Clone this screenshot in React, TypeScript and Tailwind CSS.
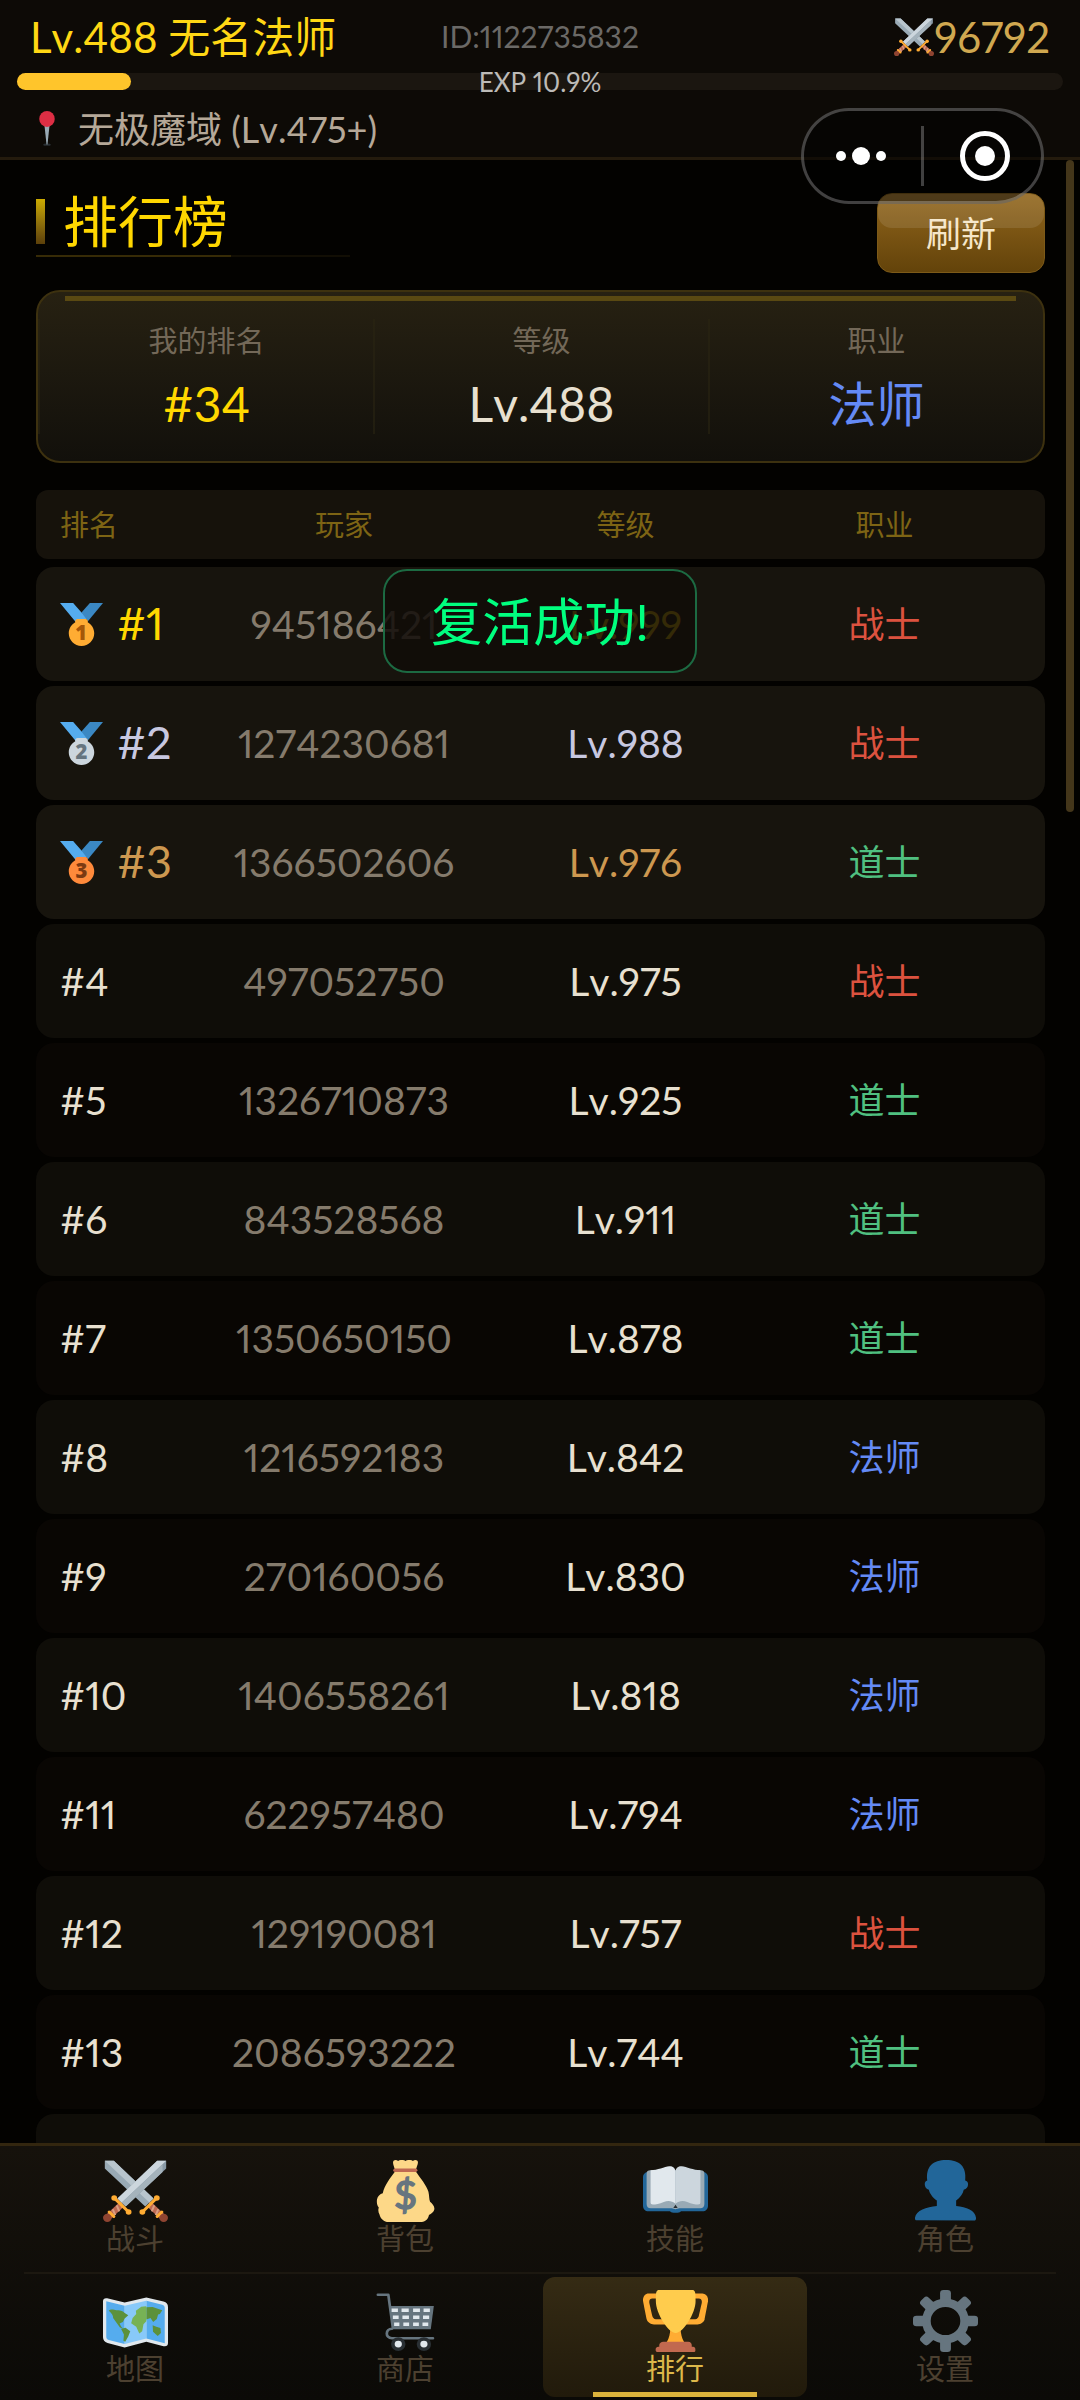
import { ReactNode } from "react";
import clsx from "clsx";

type Job = "战士" | "道士" | "法师";

interface Player {
  rank: number;
  id: string;
  level: number;
  job: Job;
}

const players: Player[] = [
  { rank: 1, id: "945186421", level: 999, job: "战士" },
  { rank: 2, id: "1274230681", level: 988, job: "战士" },
  { rank: 3, id: "1366502606", level: 976, job: "道士" },
  { rank: 4, id: "497052750", level: 975, job: "战士" },
  { rank: 5, id: "1326710873", level: 925, job: "道士" },
  { rank: 6, id: "843528568", level: 911, job: "道士" },
  { rank: 7, id: "1350650150", level: 878, job: "道士" },
  { rank: 8, id: "1216592183", level: 842, job: "法师" },
  { rank: 9, id: "270160056", level: 830, job: "法师" },
  { rank: 10, id: "1406558261", level: 818, job: "法师" },
  { rank: 11, id: "622957480", level: 794, job: "法师" },
  { rank: 12, id: "129190081", level: 757, job: "战士" },
  { rank: 13, id: "2086593222", level: 744, job: "道士" },
];

const jobColor: Record<Job, string> = {
  战士: "text-[#dc523f]",
  道士: "text-[#50c080]",
  法师: "text-[#648af5]",
};

const rankColor: Record<number, string> = {
  1: "text-[#ffd700]",
  2: "text-[#c8c8e0]",
  3: "text-[#cd9850]",
};

const medalColor: Record<number, { disc: string; digit: string }> = {
  1: { disc: "#FFAC33", digit: "#A65708" },
  2: { disc: "#CCD6DD", digit: "#66757F" },
  3: { disc: "#FF8A3B", digit: "#7C3A12" },
};

const Emoji = ({ className, children }: { className: string; children: ReactNode }) => (
  <svg viewBox="0 0 36 36" preserveAspectRatio="none" className={className} aria-hidden="true">
    {children}
  </svg>
);

const Medal = ({ rank }: { rank: number }) => (
  <Emoji className="h-[43px] w-[43px] shrink-0">
    <path fill="#55ACEE" d="M18 8l-7-8H0l14 17 11.521-4.75z" />
    <path fill="#3B88C3" d="M25 0l-7 8 5.39 7.312 1.227-1.489L36 0z" />
    <path
      fill={medalColor[rank].disc}
      d="M23.205 16.026c.08-.217.131-.448.131-.693 0-1.104-.896-2-2-2h-6.667c-1.104 0-2 .896-2 2 0 .245.05.476.131.693-3.258 1.826-5.464 5.307-5.464 9.307C7.336 31.224 12.111 36 18.003 36s10.667-4.776 10.667-10.667c0-4-2.206-7.481-5.465-9.307z"
    />
    <text x="18" y="31.3" textAnchor="middle" fontSize="17" fontWeight="800" fontFamily="Open Sans, sans-serif" fill={medalColor[rank].digit}>
      {rank}
    </text>
  </Emoji>
);

const Hilt = () => (
  <>
    <path stroke="#BF6952" strokeWidth="3.6" d="M3 33L10.5 25.6" />
    <path stroke="#D99E82" strokeWidth="1.1" d="M5.4 28.6l1.4 3.4M7.6 26.4l1.4 3.4M9.6 24.6l1.2 3" />
    <path stroke="#FFAC33" strokeWidth="1.7" strokeLinecap="round" d="M6.2 22l8 8.2M3.4 30.2l2.6 2.6" />
    <circle cx="6.2" cy="22" r="1.6" fill="#FFAC33" />
    <circle cx="14.2" cy="30.2" r="1.6" fill="#FFAC33" />
    <circle cx="2.4" cy="33.6" r="2.4" fill="#8F4431" />
  </>
);

const SwordsIcon = ({ className }: { className: string }) => (
  <Emoji className={className}>
    <path fill="#99AAB5" d="M1 5V.4h5L28 22.4 23.4 27z" />
    <path fill="#B8C5CD" d="M1 .4h5L28 22.4l-2.3 2.3z" />
    <path fill="#8899A6" d="M35 5V.4h-5L8 22.4l4.6 4.6z" />
    <path fill="#CCD6DD" d="M35 .4h-5L8 22.4l2.3 2.4z" />
    <path fill="#A5B3BC" d="M10.3 24.8L33 2.5V7L12.6 27z" />
    <Hilt />
    <g transform="matrix(-1 0 0 1 36 0)">
      <Hilt />
    </g>
  </Emoji>
);

const PinIcon = ({ className }: { className: string }) => (
  <Emoji className={className}>
    <ellipse cx="18" cy="34.6" rx="4" ry="1.2" fill="#292F33" />
    <path fill="#99AAB5" d="M15.2 14h5.6L18.5 34.5h-1z" />
    <circle cx="18" cy="8.2" r="8.2" fill="#DD2E44" />
  </Emoji>
);

const BagIcon = ({ className }: { className: string }) => (
  <Emoji className={className}>
    <path
      fill="#FDD888"
      d="M12.3 6.5C12 4.4 11 2.7 11.1 1.4 11.2-.2 13-.3 13.9.6 15-.3 17-.2 18 .6c1-.8 3-.9 4.1 0 .9-.9 2.8-.8 2.8.8 0 1.3-1 3-1.3 5.1 2.6 4 6 8 7.1 12 .5 2 .3 4.3.9 5.7 1 1 2.4 2.2 2.4 4 0 2-1.8 3-3 3.8-.3 2-1.8 4-4 4H8.6c-2.5 0-4.5-2-5-4.400-.6-1.200-.9-2.400-.4-4-1-1-1.200-3-1-4.600.3-1.900 1.700-3.300 3.200-3.700C6.500 14 9.700 10.500 12.300 6.500z"
    />
    <path fill="#BF6952" d="M12.2 5h11.4a1 1 0 010 2H12.2a1 1 0 010-2z" />
    <text x="18" y="28.3" textAnchor="middle" fontSize="22" fontWeight="500" fontFamily="Lato, sans-serif" fill="#67757F" stroke="#67757F" strokeWidth=".8">
      $
    </text>
  </Emoji>
);

const BookIcon = ({ className }: { className: string }) => (
  <Emoji className={className}>
    <path fill="#226699" d="M3 7h30c1.7 0 3 1.2 3 3v16.5c0 2-1.3 3.2-3 3.2H21c-.5 1.3-5.5 1.3-6 0H3c-1.7 0-3-1.2-3-3.2V10c0-1.8 1.3-3 3-3z" />
    <path fill="#99AAB5" d="M2 8c0-1.5.8-2 2-2h28c1.2 0 2 .5 2 2v17.5c0 1.6-.8 2.5-2.3 2.5H20l-2 .6-2-.6H4.3C2.8 28 2 27.1 2 25.5z" />
    <path fill="#E1E8ED" d="M4.2 6C8 6 12 4 14.5 3.7 16.8 3.5 18 5 18 7v18.4c-2-2-4.5-2-6.5-1C9 25.6 7 25.9 5.5 25.9c-.9 0-1.3-.4-1.3-1.3z" />
    <path fill="#CCD6DD" d="M31.8 6C28 6 24 4 21.5 3.7 19.2 3.5 18 5 18 7v18.4c2-2 4.5-2 6.5-1 2.5 1.2 4.5 1.5 6 1.5.9 0 1.3-.4 1.3-1.3z" />
    <path fill="#292F33" d="M18 26l1.2 1.8h-2.4z" />
  </Emoji>
);

const RoleIcon = ({ className }: { className: string }) => (
  <Emoji className={className}>
    <path
      fill="#226699"
      d="M2.2 35C1.3 35 1 34.5 1.1 33.5 1.6 29.3 7.5 27.3 13.2 26.7v-3.2c-2.2-1.5-4-4-4.4-6.2C7.3 16.9 6.5 15.6 6.5 14.1c0-1.3.5-2 1.4-2.2C7 3.8 11 0 18.4 0s11.4 3.8 10.5 11.9c1 .2 1.6 1 1.6 2.2 0 1.5-.9 2.9-2.4 3.2-.4 2.2-2 4.7-4.2 6.2v3.2c5.7.6 10.6 2.6 11 6.8.1 1-.2 1.7-1.1 1.7z"
    />
  </Emoji>
);

const MapIcon = ({ className }: { className: string }) => (
  <Emoji className={className}>
    <path fill="#E1E8ED" d="M0 6.5c0-1.4 1-2 2.3-1.7L12 7.3l12-3 9.5 2.4C35.2 7.2 36 8.2 36 10v20.8c0 1.5-1 2.2-2.5 1.8L24 30l-12 3.4-9.5-2.6C.8 30.3 0 29 0 27.5z" />
    <path fill="#55ACEE" d="M1.8 6.6L12 9.2v22.2L3.2 29c-1-.3-1.4-1-1.4-2zM24 6.2L32.8 8.5c1 .3 1.4 1 1.4 2v20.4L24 28.1z" />
    <path fill="#88C9F9" d="M12 9.2l12-3v21.9l-12 3.3z" />
    <path
      fill="#5C913B"
      d="M3.2 12c1.3-1.2 3-.3 4.2-.2 1.6 0 3.6.2 4.6 1.6l2 1.2-2 2-1 2-1.8.8.8 1.8 1 1-1.6-.4-2-3-1.8-2.6c.2-1.7-1.2-3-2.4-4.2zM10 22.5l2.5-.6 2.6 2-1.2 3.2-1.6 2.9-1-.6.3-3.6zM24 10l3.5-.2 5.3 2-1.3 2.2-1 .2-.7 2.6-2 1.8-1.5-2.4-2.3 1zM27.5 20.5l2 .8 2.3.7.3 3-1.8 1.7-2.6-2.4z"
    />
    <path fill="#77B255" d="M24 9.5v8.7l-1.6 1.7-.7 4-1.6 1.4-1.7-4-2.8-2 .8-3 2-2.4-.2-1.9 3-2.3z" />
  </Emoji>
);

const CartIcon = ({ className }: { className: string }) => (
  <Emoji className={className}>
    <path fill="none" stroke="#66757F" strokeWidth="1.5" strokeLinecap="round" strokeLinejoin="round" d="M2.7 2.8H8.5L11 22M33.2 28H10.5c-4 0-3.6-5.5 0-5.5" />
    <path fill="#66757F" d="M9 9.3h24.700L32 22.800H10.800z" />
    <path
      stroke="#E1E8ED"
      strokeWidth="2"
      d="M10.3 11.8h3.5M15.8 11.8h4M22.2 11.8h3.8M28 11.8h3.5M11 15.8h3.2M16.3 15.8h3.6M22.2 15.8h3.5M27.7 15.8h3.4M11.7 19.9h2.9M16.8 19.9h3.2M22.2 19.9h3.2M27.4 19.9h3.2"
    />
    <circle cx="14" cy="31.4" r="3" fill="#E1E8ED" stroke="#292F33" strokeWidth="2" />
    <circle cx="28.2" cy="31.4" r="3" fill="#E1E8ED" stroke="#292F33" strokeWidth="2" />
  </Emoji>
);

const TrophyIcon = ({ className }: { className: string }) => (
  <Emoji className={className}>
    <path
      fill="#FFAC33"
      d="M5.123 5h6C12.227 5 13 4.896 13 6V4c0-1.104-.773-2-1.877-2h-8c-2 0-3.583 2.125-3 5 0 0 1.791 9.375 1.917 9.958C2.373 18.5 4.164 20 6.081 20h6.958c1.105 0-.039-1.896-.039-3v-2c0 1.104-.773 2-1.877 2h-4c-1.104 0-1.833-1.042-2-2S3.539 7.667 3.539 7.667C3.206 5.75 4.018 5 5.123 5zm25.812 0h-6C23.831 5 22 4.896 22 6V4c0-1.104 1.831-2 2.935-2h8c2 0 3.584 2.125 3 5 0 0-1.633 9.419-1.771 10-.354 1.5-2.042 3-4 3h-7.146C21.914 20 22 18.104 22 17v-2c0 1.104 1.831 2 2.935 2h4c1.104 0 1.834-1.042 2-2s1.584-7.333 1.584-7.333C32.851 5.75 32.04 5 30.935 5zM20.832 22c0-6.958-2.709 0-2.709 0s-3-6.958-3 0-3.291 10-3.291 10h12.292c-.001 0-3.292-3.042-3.292-10z"
    />
    <path fill="#FFCC4D" d="M29.123 6.577c0 6.775-6.77 18.423-11 18.423-4.231 0-11-11.649-11-18.423C7.123 1.173 7.123 0 9.123 0h18c1.917-.001 2 1.173 2 6.577z" />
    <path fill="#C1694F" d="M27 33c0 1.104.227 2-.877 2h-16C9.018 35 9 34.104 9 33v-1c0-1.104 1.164-2 2.206-2h13.917c1.042 0 1.877.896 1.877 2v1z" />
    <path fill="#C1694F" d="M29 34.625c0 .76.165 1.375-1.252 1.375H8.498C7.206 36 7 35.385 7 34.625v-.25C7 33.615 7.738 33 8.498 33h19.25c.759 0 1.252.615 1.252 1.375v.25z" />
  </Emoji>
);

const GearIcon = ({ className }: { className: string }) => (
  <Emoji className={className}>
    <circle cx="18" cy="18" r="10.6" fill="none" stroke="#66757F" strokeWidth="4.8" />
    {[0, 45, 90, 135, 180, 225, 270, 315].map((angle) => (
      <rect key={angle} x="15" y="0" width="6" height="8" rx="1.9" fill="#66757F" transform={`rotate(${angle} 18 18)`} />
    ))}
  </Emoji>
);

const navRows = [
  [
    { label: "战斗", Icon: SwordsIcon },
    { label: "背包", Icon: BagIcon },
    { label: "技能", Icon: BookIcon },
    { label: "角色", Icon: RoleIcon },
  ],
  [
    { label: "地图", Icon: MapIcon },
    { label: "商店", Icon: CartIcon },
    { label: "排行", Icon: TrophyIcon, active: true },
    { label: "设置", Icon: GearIcon },
  ],
];

const Header = () => (
  <header className="border-b-3 border-[#241b0d] bg-[#0d0a06]">
    <div className="grid h-[73px] grid-cols-[1fr_auto_1fr] items-center px-[30px]">
      <span className="text-[42px] leading-[52px] text-[#ffd714]">Lv.488 无名法师</span>
      <span className="text-[30px] text-[#6b6966]">ID:1122735832</span>
      <span className="flex items-center justify-end text-[42px] leading-[52px] text-[#d0a850]">
        <SwordsIcon className="h-[38px] w-10" />
        96792
      </span>
    </div>
    <div className="relative mx-[17px] h-[17px] rounded-full bg-[#1b1610]">
      <div className="h-full rounded-full bg-[#ffc52b]" style={{ width: "10.9%" }} />
      <span className="absolute inset-0 flex items-center justify-center text-[26px] leading-none text-[#bdbbb8]">EXP 10.9%</span>
    </div>
    <div className="flex h-[67px] items-center gap-3.5 px-[30px] pt-2.5 text-[36px] leading-[44px] text-[#b5a898]">
      <PinIcon className="h-[35px] w-[34px]" />
      <span>无极魔域 (Lv.475+)</span>
    </div>
  </header>
);

// mini program menu, floats over the page
const Capsule = () => (
  <div className="absolute top-[108px] right-9 flex h-24 w-[243px] items-center rounded-full border-3 border-white/25 bg-black/50">
    <button type="button" aria-label="更多" className="flex h-full flex-1 items-center justify-center gap-1.5 pr-1">
      <span className="h-2.5 w-2.5 rounded-full bg-white" />
      <span className="h-[18px] w-[18px] rounded-full bg-white" />
      <span className="h-2.5 w-2.5 rounded-full bg-white" />
    </button>
    <span className="h-[60px] w-[3px] bg-white/25" />
    <button type="button" aria-label="关闭" className="flex h-full flex-1 items-center justify-center pl-1">
      <span className="flex h-[50px] w-[50px] items-center justify-center rounded-full border-5 border-white">
        <span className="h-5 w-5 rounded-full bg-white" />
      </span>
    </button>
  </div>
);

const Stat = ({ label, value, className }: { label: string; value: string; className: string }) => (
  <div className="flex flex-col items-center border-l-2 border-[#2a2413]/60 pt-1 first:border-transparent">
    <span className="text-[29px] leading-9 text-[#736858]">{label}</span>
    <span className={clsx("mt-[15px] text-[48px] leading-[60px]", className)}>{value}</span>
  </div>
);

const PlayerRow = ({ player }: { player: Player }) => {
  const isTop = player.rank <= 3;

  return (
    <tr
      className={clsx(
        "grid h-[114px] grid-cols-[125fr_318fr_245fr_273fr] items-center rounded-[18px] px-6 text-center text-[39px]",
        isTop ? "bg-[#17140d]" : player.rank % 2 === 0 ? "bg-[#0f0d08]" : "bg-[#090603]"
      )}
    >
      <td className="flex items-center gap-3.5 text-left whitespace-nowrap">
        {isTop && <Medal rank={player.rank} />}
        <span className={isTop ? clsx("text-[45px]", rankColor[player.rank]) : "text-[#e8e0d0]"}>#{player.rank}</span>
      </td>
      <td className="text-[#857b6c]">{player.id}</td>
      <td className={rankColor[player.rank] ?? "text-[#e8e0d0]"}>Lv.{player.level}</td>
      <td className={clsx("text-[36px]", jobColor[player.job])}>{player.job}</td>
    </tr>
  );
};

const BottomNav = () => (
  <nav className="border-t-3 border-[#33260f] bg-linear-to-b from-[#16120c] to-[#0b0a07]">
    {navRows.map((row, index) => (
      <div key={index}>
        {index > 0 && <div className="mx-6 h-0.5 bg-[#1c1810]" />}
        <div className="grid grid-cols-4">
          {row.map(({ label, Icon, active }: { label: string; Icon: typeof GearIcon; active?: boolean }) => (
            <button
              key={label}
              type="button"
              className={clsx(
                "relative m-[3px] flex h-[120px] flex-col items-center rounded-xl text-[29px] leading-[34px]",
                index > 0 ? "pt-[13px]" : "pt-[11px]",
                active ? "bg-linear-to-b from-[#352b14] to-[#211a0b] text-[#dcb84a]" : "text-[#4c4030]"
              )}
            >
              <Icon className="h-[62px] w-[65px]" />
              {label}
              {active && <span className="absolute inset-x-[19%] bottom-0 h-[5px] bg-[#dcb33c]" />}
            </button>
          ))}
        </div>
      </div>
    ))}
  </nav>
);

const App = () => {
  return (
    <div className="relative flex h-screen flex-col overflow-hidden bg-[#030200] font-['Lato','Noto_Sans_CJK_SC',sans-serif] proportional-nums [font-kerning:none]">
      <Header />

      <main className="relative min-h-0 flex-1 overflow-hidden pt-[33px] pr-[35px] pl-9">
        <div className="flex items-start justify-between">
          <div>
            <h1 className="flex items-center gap-[18px] text-[55px] leading-[56px] text-[#ffd700]">
              <span className="h-[45px] w-[9px] bg-linear-to-b from-[#ccab00] to-[#5c400a]" />
              排行榜
            </h1>
            <div className="mt-1.5 h-0.5 w-[314px] bg-[#120e04]">
              <div className="h-full w-[62%] bg-[#372b06]" />
            </div>
          </div>
          <button
            type="button"
            className="relative h-20 w-[168px] rounded-[15px] border border-[#7d5a18] bg-linear-to-b from-[#92661c] to-[#63430a] text-[35px] text-[#f5e6c8]"
          >
            <span className="absolute inset-x-0 top-0 h-[34px] rounded-[14px] bg-white/10" />
            刷新
          </button>
        </div>

        <section className="relative mt-[17px] grid grid-cols-3 rounded-3xl border-2 border-[#3d310f] bg-linear-to-b from-[#272112] to-[#12100b] py-[27px]">
          <div className="absolute inset-x-[27px] top-1 h-[5px] bg-[#5a4912]" />
          <Stat label="我的排名" value="#34" className="text-[#ffd700]" />
          <Stat label="等级" value="Lv.488" className="text-[#e8e0d0]" />
          <Stat label="职业" value="法师" className="text-[#648af5]" />
        </section>

        <table className="mt-[27px] block">
          <thead className="block">
            <tr className="grid h-[69px] grid-cols-[125fr_318fr_245fr_273fr] items-center rounded-xl bg-[#16120b] px-6 text-[29px] text-[#7d6414]">
              <th className="text-left font-normal">排名</th>
              <th className="font-normal">玩家</th>
              <th className="font-normal">等级</th>
              <th className="font-normal">职业</th>
            </tr>
          </thead>
          <tbody className="mt-2 flex flex-col gap-[5px]">
            {players.map((player) => (
              <PlayerRow key={player.rank} player={player} />
            ))}
            <tr className="block h-[114px] rounded-[18px] bg-[#0f0d08]" />
          </tbody>
        </table>

        {/* scroll thumb */}
        <div className="absolute top-0 right-1.5 h-[652px] w-2 rounded-full bg-[#44361a]" />
      </main>

      <BottomNav />

      <Capsule />

      <div
        role="status"
        className="absolute top-[569px] left-1/2 flex h-[104px] w-[314px] -translate-x-1/2 items-center justify-center rounded-3xl border-2 border-[#1c6a42] bg-[#100c08]/85 text-[51px] leading-none whitespace-nowrap text-[#00ff7f]"
      >
        复活成功!
      </div>
    </div>
  );
};

export default App;
